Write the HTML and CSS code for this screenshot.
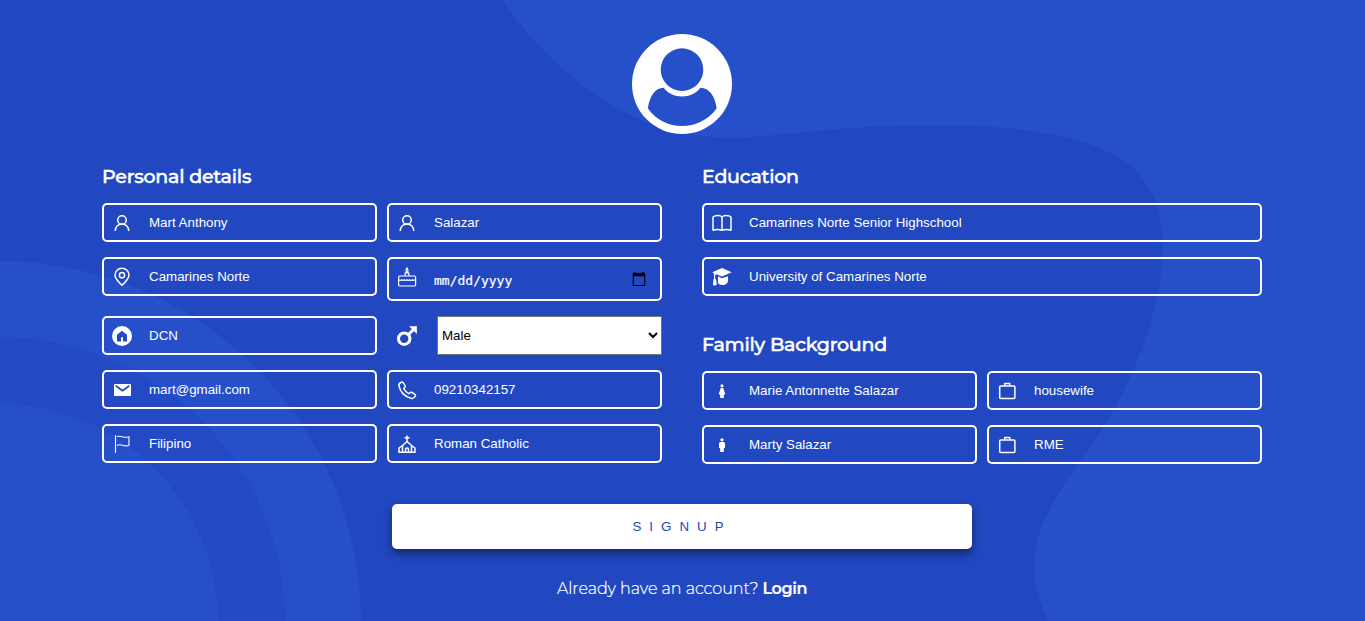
FILE: index.html
```html
<!DOCTYPE html>
<html lang="en">
<head>
<meta charset="utf-8">
<title>Signup</title>
<link rel="stylesheet" href="styles.css">
</head>
<body>
<svg class="backdrop" viewBox="0 0 1365 621" preserveAspectRatio="none" aria-hidden="true">
  <path fill="#264fca" d="M503 0C524 34 551 60 582 85C630 123 685 138 731 138C765 138 840 125 943 125C1010 125 1080 135 1118 157C1150 175 1163 212 1163 245C1163 300 1140 360 1115 408C1085 460 1034 510 1034 566C1034 588 1041 607 1048 621H1365V0Z"/>
  <circle cx="0" cy="622" r="361" fill="#264fca"/>
  <circle cx="0" cy="622" r="285" fill="#234ac4"/>
  <circle cx="0" cy="622" r="218" fill="#264fca"/>
</svg>
<main class="page">
  <svg class="avatar" viewBox="0 0 101 101">
    <circle cx="50.500" cy="50.500" r="50.500" fill="#fff"/>
    <path fill="#264fca" d="M16 75C18 63 23 54.500 32 54.300C40 66 61 66 69 54.300C78 54.500 84 63 85.500 75C69 99 32 99 16 75Z"/>
    <circle cx="50.500" cy="36" r="21.500" fill="#264fca"/>
  </svg>
  <form class="columns">
    <section class="column">
      <h3 class="title">Personal details</h3>
      <div class="grid">
        <label class="field"><svg class="icon" viewBox="0 0 20 20"><circle cx="10" cy="7" r="4.300"/><path d="M3.200 18C3.200 8.600 16.800 8.600 16.800 18"/></svg><input class="input" value="Mart Anthony"></label>
        <label class="field"><svg class="icon" viewBox="0 0 20 20"><circle cx="10" cy="7" r="4.300"/><path d="M3.200 18C3.200 8.600 16.800 8.600 16.800 18"/></svg><input class="input" value="Salazar"></label>
        <label class="field"><svg class="icon" viewBox="0 0 20 20"><path d="M10 18.200C6 14.500 3 11.500 3 8.200a7 7 0 0 1 14 0C17 11.500 14 14.500 10 18.200Z"/><circle cx="10" cy="8.200" r="2.600"/></svg><input class="input" value="Camarines Norte"></label>
        <div class="field field-date"><svg class="icon icon-cake" viewBox="0 0 20 20"><rect x="1.600" y="9" width="17" height="10" rx="1.300"/><path d="M2 12.700q1.300 1.400 2.700 0q1.300 1.400 2.700 0q1.300 1.400 2.700 0q1.300 1.400 2.700 0q1.300 1.400 2.700 0q1.300 1.400 2.500 0M8.200 9V5.800h3.600V9"/><path d="M10 5.500C8 4 9.200 2.500 10 .800C11 2.500 12 4 10 5.500Z"/></svg><span class="date">mm/dd/yyyy</span><svg class="calendar" viewBox="0 0 14 14"><path fill="#000" fill-rule="evenodd" d="M2.300 0h1.500v1h6.400V0h1.500v1h1.500v13H.700V1h1.600zM1.800 4.200v8.700h10.400V4.200z"/></svg></div>
        <label class="field"><svg class="icon" viewBox="0 0 20 20"><circle class="solid" cx="10" cy="10" r="10"/><path class="cut" d="M5 8.800 10 4.800l5 4v6.700h-4v-4.300H9v4.300H5z"/></svg><input class="input" value="DCN"></label>
        <div class="choice"><svg class="male" viewBox="0 0 20 20"><circle cx="7.200" cy="12.700" r="5.700"/><path d="M11 9 17 3"/><path class="tip" d="M12 .200h7.900v7.900z"/></svg><select class="select"><option>Male</option></select></div>
        <label class="field"><svg class="icon" viewBox="0 0 20 20"><rect class="solid" x="2" y="4" width="17" height="12" rx="1"/><path class="flap" d="M3.800 5.700l6.700 5 6.700-5"/></svg><input class="input" value="mart@gmail.com"></label>
        <label class="field"><svg class="icon" viewBox="0 0 20 20"><path d="M4.300 2.200C2.500 3 1.500 4.200 1.900 5.700C3 12 8 17 14.500 18.400C16 18.700 17.500 17.500 18.400 15.900C18.700 15.200 18.500 14.700 18 14.300L15 12.500C14.200 12 13.600 12.100 13 12.700L11.900 13.700C9.500 12.500 7.900 10.900 6.700 8.500L7.800 7.500C8.400 7 8.500 6.300 8.100 5.600L6.100 2.600C5.600 1.900 5 1.800 4.300 2.200Z"/></svg><input class="input" value="09210342157"></label>
        <label class="field"><svg class="icon thin" viewBox="0 0 20 20"><path d="M3.500 1v18"/><path d="M5 2.800C9 .500 11 5 17 2.700v8.600C12 13.500 9 9 5 11.500"/></svg><input class="input" value="Filipino"></label>
        <label class="field"><svg class="icon" viewBox="0 0 20 20"><path d="M10 1.500v6M7.500 3.700h5M5.500 18.500v-7L10 7.500l4.500 4v7M5.500 11.500 2 14v4.300h16V14l-3.500-2.500M8.500 18.500v-3a1.500 1.500 0 0 1 3 0v3"/></svg><input class="input" value="Roman Catholic"></label>
      </div>
    </section>
    <section class="column">
      <h3 class="title">Education</h3>
      <div class="grid single">
        <label class="field"><svg class="icon" viewBox="0 0 20 20"><path d="M10 4Q8.500 2.500 6 2.600Q2.500 2.700 1 4v13.300Q5.500 15.500 10 17.300Q14.500 15.500 19 17.300V4Q17.500 2.700 14 2.600Q11.500 2.500 10 4ZM10 4v13.300"/></svg><input class="input" value="Camarines Norte Senior Highschool"></label>
        <label class="field"><svg class="icon" viewBox="0 0 20 20"><path class="solid" d="M.300 5.300 10 1 19.700 5.300 10 9.500 4.500 7.300 3.200 8V11.500L4.300 13 4.800 17.500 3 18.700.900 18 1.400 13 2 11.500V6.500ZM6 9.200 10 11.200 16 9.200V14C15.500 18.800 7.500 19 6 16Z"/></svg><input class="input" value="University of Camarines Norte"></label>
      </div>
      <h3 class="title title-family">Family Background</h3>
      <div class="grid">
        <label class="field"><svg class="icon" viewBox="0 0 20 20"><circle class="solid" cx="10" cy="4.800" r="1.600"/><path class="solid" d="M8.800 7h2.400L13.300 13l-1.500 1v3H8.200v-3l-1.500-1z"/></svg><input class="input" value="Marie Antonnette Salazar"></label>
        <label class="field"><svg class="icon" viewBox="0 0 20 20"><rect x="2.700" y="5" width="15.200" height="12.500" rx="1"/><path d="M7.700 4.800V2.600h5.100v2.200"/></svg><input class="input" value="housewife"></label>
        <label class="field"><svg class="icon" viewBox="0 0 20 20"><circle class="solid" cx="10" cy="4.800" r="1.600"/><path class="solid" d="M8 7h4L13 8v4.700l-1.200.8V17H8.200v-3.500L7 12.700V8z"/></svg><input class="input" value="Marty Salazar"></label>
        <label class="field"><svg class="icon" viewBox="0 0 20 20"><rect x="2.700" y="5" width="15.200" height="12.500" rx="1"/><path d="M7.700 4.800V2.600h5.100v2.200"/></svg><input class="input" value="RME"></label>
      </div>
    </section>
  </form>
  <button class="signup" type="button">SIGNUP</button>
  <p class="login"><span class="ask">Already have an account?</span><a class="link">Login</a></p>
</main>
</body>
</html>
```
FILE: styles.css
```css
* { box-sizing: border-box; }
body {
  margin: 0;
  height: 621px;
  overflow: hidden;
  background: #2148c0;
  color: #fff;
  font-family: Montserrat, Inter, sans-serif;
}
.backdrop { position: absolute; left: 0; top: 0; width: 1365px; height: 621px; z-index: -1; }
.page {
  display: flex;
  flex-direction: column;
  align-items: center;
  width: 1364px;
  padding: 34px 102px 0;
}
.avatar { width: 100px; height: 100px; flex: none; }
.columns { display: flex; gap: 40px; width: 1160px; margin-top: 31px; }
.column { width: 560px; }
.title {
  width: max-content;
  margin: 0 0 14px;
  font-size: 19px;
  font-weight: 500;
  line-height: 24px;
  letter-spacing: -0.22px;
  white-space: nowrap;
  -webkit-text-stroke: 0.5px #fff;
}
.title-family { margin-top: 37px; }
.grid { display: grid; grid-template-columns: 275px 275px; gap: 15px 10px; align-items: start; }
.grid.single { grid-template-columns: 560px; }
.field {
  display: flex;
  align-items: center;
  height: 39px;
  padding: 0 8px;
  border: 2px solid #fff;
  border-radius: 5px;
}
.field-date { height: 44px; }
.icon { width: 20px; height: 20px; flex: none; overflow: visible; fill: none; stroke: #fff; stroke-width: 1.5; stroke-linejoin: round; }
.icon .solid { fill: #fff; stroke: none; }
.icon .cut { fill: #2349c3; stroke: none; }
.icon .flap { stroke: #244bc5; stroke-width: 1.8; }
.thin { stroke-width: 1.1; }
.icon-cake { margin-top: -4px; stroke-width: 1.2; }
.input {
  flex: 1;
  min-width: 0;
  margin: 0 0 1px 17px;
  padding: 0;
  border: 0;
  outline: 0;
  background: transparent;
  color: #fff;
  font: 13.333px/17px "Liberation Sans", Arial, sans-serif;
}
.date { margin: 3px 0 0 17px; font: 13px/16px "DejaVu Sans Mono", monospace; -webkit-text-stroke: 0.2px #fff; }
.calendar { width: 14px; height: 14px; margin: 0 6px 0 auto; }
.choice { display: flex; align-items: center; height: 39px; padding-left: 10px; }
.male { width: 20px; height: 20px; margin-right: 20px; fill: none; stroke: #fff; stroke-width: 3; }
.male .tip { fill: #fff; stroke: none; }
.select {
  width: 225px;
  height: 39px;
  padding: 0;
  border: 1px solid #767676;
  border-radius: 0;
  background-color: #fff;
  color: #000;
  font: 13.333px "Liberation Sans", Arial, sans-serif;
}
.signup {
  width: 580px;
  height: 45px;
  margin-top: 40px;
  padding: 0;
  border: 0;
  border-radius: 5px;
  background: #fff;
  box-shadow: 0 5px 10px rgba(0, 0, 0, 0.45);
  color: #2148c0;
  font: 13.333px "Liberation Sans", Arial, sans-serif;
  letter-spacing: 8px;
}
.login { display: flex; gap: 4px; margin: 30px 0 0; font-size: 16px; line-height: 20px; white-space: nowrap; }
.ask { font-weight: 300; letter-spacing: -0.05px; -webkit-text-stroke: 0.2px #fff; }
.link { font-weight: 600; letter-spacing: -0.4px; -webkit-text-stroke: 0.2px #fff; }
```
